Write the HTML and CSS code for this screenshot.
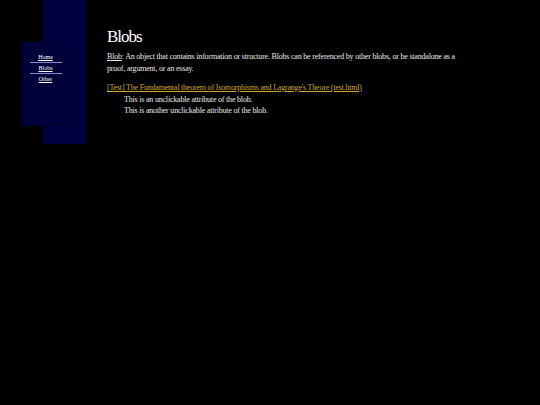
FILE: index.html
```html
<!DOCTYPE html>
<html>
<head>
<meta charset="utf-8">
<link rel="stylesheet" href="styles.css">
</head>
<body>
<div class="page">
  <div class="side">
    <div class="column"></div>
    <nav class="nav">
      <a href="#" class="nav-link">Home</a>
      <a href="#" class="nav-link">Blobs</a>
      <a href="#" class="nav-link">Other</a>
    </nav>
  </div>
  <main class="main">
    <h1 class="title">Blobs</h1>
    <p class="intro"><span class="term">Blob</span>: An object that contains information or structure. Blobs can be referenced by other blobs, or be standalone as a proof, argument, or an essay.</p>
    <div class="blob">
      <a href="#" class="blob-link">[Test] The Fundamental theorem of Isomorphisms and Lagrange's Theore (test.html)</a>
      <div class="attr">This is an unclickable attribute of the blob.</div>
      <div class="attr">This is another unclickable attribute of the blob.</div>
    </div>
  </main>
</div>
</body>
</html>
```

FILE: styles.css
```css
html, body {
  margin: 0;
  padding: 0;
  background: #000;
}
body {
  font-family: "Liberation Serif", "Times New Roman", serif;
  color: #e8e8e8;
}
.page {
  display: flex;
  align-items: flex-start;
}
.side {
  position: relative;
  width: 86px;
  padding-left: 43px;
  box-sizing: border-box;
  flex: none;
}
.column {
  width: 43px;
  height: 144px;
  background: #00003f;
}
.nav {
  position: absolute;
  left: 22px;
  top: 42px;
  width: 47px;
  height: 84px;
  background: #00003a;
  border-right: 1px solid #000030;
  border-bottom: 1px solid #000030;
  display: flex;
  flex-direction: column;
  align-items: center;
  padding-top: 10px;
  box-sizing: border-box;
}
.nav-link {
  display: block;
  width: 32px;
  text-align: center;
  color: #fff;
  font-size: 6px;
  line-height: 10px;
  text-decoration: underline;
  border-bottom: 1px solid #8888cc;
  margin-left: 1px;
}
.nav-link:last-child {
  border-bottom: none;
}
.main {
  margin-left: 21px;
  width: 360px;
  padding-top: 27px;
}
.title {
  margin: 0;
  font-size: 17px;
  font-weight: normal;
  line-height: 20px;
  color: #fff;
  letter-spacing: -1px;
}
.intro {
  margin: 4px 0 0 0;
  font-size: 8px;
  line-height: 12px;
  letter-spacing: -0.2px;
}
.term {
  text-decoration: underline;
}
.blob {
  margin-top: 7px;
  font-size: 8px;
  line-height: 11.5px;
  letter-spacing: -0.2px;
}
.blob-link {
  color: #cfa62a;
  text-decoration: underline;
}
.attr {
  padding-left: 17px;
}
```
